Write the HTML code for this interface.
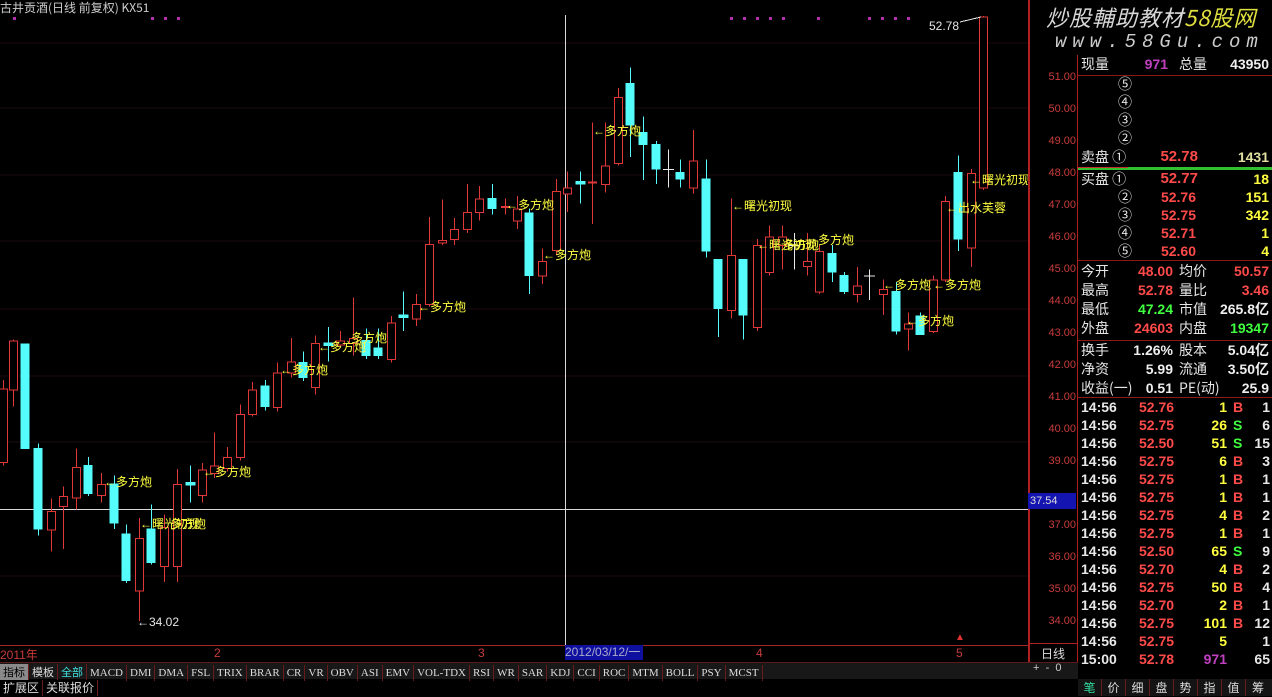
<!DOCTYPE html>
<html><head><meta charset="utf-8"><style>
*{margin:0;padding:0;box-sizing:border-box}
body{width:1272px;height:696px;background:#000;position:relative;overflow:hidden;font-family:"Liberation Sans","Noto Sans CJK SC",sans-serif;color:#ddd}
.a{position:absolute;white-space:nowrap}
.p{font-size:14px;line-height:18px;font-weight:bold}
.w{color:#e6e6e6;font-weight:normal;font-family:"Noto Sans CJK SC",sans-serif}
.r{color:#ff4a4a}.g{color:#40ff40}.y{color:#ffff40}.m{color:#c040c0}
.rt{text-align:right}
.ax{font-size:11px;color:#c83c3c;right:0}
.tab span{display:inline-block;padding:0 3px;border-right:1px solid #6a1a1a;font-size:11px;color:#ddd;line-height:16px;font-family:"Liberation Serif","Noto Sans CJK SC",serif}
svg *{shape-rendering:crispEdges}
.sc *{vector-effect:non-scaling-stroke}
</style></head><body>
<svg class="a" style="left:0px;top:0px" width="1028" height="645">
<g stroke="#1c0c0c" stroke-width="1">
<line x1="0" y1="43" x2="1028" y2="43"/><line x1="0" y1="108" x2="1028" y2="108"/><line x1="0" y1="175" x2="1028" y2="175"/><line x1="0" y1="241" x2="1028" y2="241"/><line x1="0" y1="309" x2="1028" y2="309"/><line x1="0" y1="376" x2="1028" y2="376"/><line x1="0" y1="442" x2="1028" y2="442"/><line x1="0" y1="576" x2="1028" y2="576"/>
</g>
<g fill="#b030b0"><rect x="13" y="17" width="3" height="3"/><rect x="151" y="17" width="3" height="3"/><rect x="164" y="17" width="3" height="3"/><rect x="177" y="17" width="3" height="3"/><rect x="730" y="17" width="3" height="3"/><rect x="743" y="17" width="3" height="3"/><rect x="756" y="17" width="3" height="3"/><rect x="769" y="17" width="3" height="3"/><rect x="782" y="17" width="3" height="3"/><rect x="817" y="17" width="3" height="3"/><rect x="868" y="17" width="3" height="3"/><rect x="881" y="17" width="3" height="3"/><rect x="894" y="17" width="3" height="3"/><rect x="907" y="17" width="3" height="3"/></g>
<line x1="565.5" y1="15" x2="565.5" y2="645" stroke="#d8d8d8"/>
<line x1="0" y1="509.5" x2="1028" y2="509.5" stroke="#d8d8d8"/>
<g class="sc" transform="scale(1,1.225)">
<g stroke="#e03838" fill="#000" stroke-width="1">
<line x1="3.5" y1="310" x2="3.5" y2="380"/><rect x="-1.5" y="317.5" width="9" height="60"/>
<line x1="13.5" y1="277" x2="13.5" y2="332"/><rect x="9.5" y="278.5" width="8" height="40"/>
<line x1="51.5" y1="407" x2="51.5" y2="450"/><rect x="47.5" y="417.5" width="8" height="15"/>
<line x1="63.5" y1="397" x2="63.5" y2="448"/><rect x="59.5" y="405.5" width="8" height="8"/>
<line x1="76.5" y1="366" x2="76.5" y2="416"/><rect x="72.5" y="381.5" width="8" height="25"/>
<line x1="101.5" y1="386" x2="101.5" y2="410"/><rect x="97.5" y="395.5" width="8" height="9"/>
<line x1="139.5" y1="423" x2="139.5" y2="507"/><rect x="135.5" y="439.5" width="8" height="43"/>
<line x1="164.5" y1="420" x2="164.5" y2="475"/><rect x="160.5" y="430.5" width="8" height="32"/>
<line x1="177.5" y1="383" x2="177.5" y2="475"/><rect x="173.5" y="395.5" width="8" height="67"/>
<line x1="202.5" y1="378" x2="202.5" y2="410"/><rect x="198.5" y="383.5" width="8" height="21"/>
<line x1="214.5" y1="353" x2="214.5" y2="390"/><rect x="210.5" y="380.5" width="8" height="6"/>
<line x1="227.5" y1="365" x2="227.5" y2="385"/><rect x="223.5" y="373.5" width="8" height="9"/>
<line x1="240.5" y1="330" x2="240.5" y2="376"/><rect x="236.5" y="338.5" width="8" height="35"/>
<line x1="252.5" y1="312" x2="252.5" y2="340"/><rect x="248.5" y="318.5" width="8" height="20"/>
<line x1="277.5" y1="296" x2="277.5" y2="336"/><rect x="273.5" y="304.5" width="8" height="28"/>
<line x1="291.5" y1="276" x2="291.5" y2="308"/><rect x="287.5" y="295.5" width="8" height="9"/>
<line x1="315.5" y1="274" x2="315.5" y2="322"/><rect x="311.5" y="280.5" width="8" height="36"/>
<line x1="340.5" y1="270" x2="340.5" y2="284"/><rect x="336.5" y="278.5" width="8" height="3"/>
<line x1="353.5" y1="243" x2="353.5" y2="290"/><rect x="349.5" y="276.5" width="8" height="4"/>
<line x1="391.5" y1="258" x2="391.5" y2="296"/><rect x="387.5" y="263.5" width="8" height="30"/>
<line x1="416.5" y1="240" x2="416.5" y2="266"/><rect x="412.5" y="248.5" width="8" height="12"/>
<line x1="429.5" y1="177" x2="429.5" y2="250"/><rect x="425.5" y="199.5" width="8" height="49"/>
<line x1="442.5" y1="163" x2="442.5" y2="200"/><rect x="438.5" y="196.5" width="8" height="2"/>
<line x1="454.5" y1="178" x2="454.5" y2="200"/><rect x="450.5" y="187.5" width="8" height="8"/>
<line x1="467.5" y1="150" x2="467.5" y2="190"/><rect x="463.5" y="173.5" width="8" height="14"/>
<line x1="479.5" y1="152" x2="479.5" y2="180"/><rect x="475.5" y="162.5" width="8" height="11"/>
<line x1="505.5" y1="162" x2="505.5" y2="175"/><rect x="501.5" y="168.5" width="8" height="1"/>
<line x1="517.5" y1="160" x2="517.5" y2="187"/><rect x="513.5" y="170.5" width="8" height="10"/>
<line x1="542.5" y1="203" x2="542.5" y2="232"/><rect x="538.5" y="213.5" width="8" height="12"/>
<line x1="556.5" y1="146" x2="556.5" y2="208"/><rect x="552.5" y="156.5" width="8" height="48"/>
<line x1="567.5" y1="140" x2="567.5" y2="173"/><rect x="563.5" y="153.5" width="8" height="5"/>
<line x1="592.5" y1="100" x2="592.5" y2="183"/><rect x="588.5" y="148.5" width="8" height="1"/>
<line x1="605.5" y1="100" x2="605.5" y2="157"/><rect x="601.5" y="135.5" width="8" height="15"/>
<line x1="618.5" y1="72" x2="618.5" y2="135"/><rect x="614.5" y="79.5" width="8" height="54"/>
<line x1="693.5" y1="106" x2="693.5" y2="158"/><rect x="689.5" y="131.5" width="8" height="22"/>
<line x1="731.5" y1="162" x2="731.5" y2="260"/><rect x="727.5" y="208.5" width="8" height="45"/>
<line x1="757.5" y1="195" x2="757.5" y2="270"/><rect x="753.5" y="200.5" width="8" height="67"/>
<line x1="769.5" y1="184" x2="769.5" y2="225"/><rect x="765.5" y="193.5" width="8" height="29"/>
<line x1="782.5" y1="184" x2="782.5" y2="220"/><rect x="778.5" y="193.5" width="8" height="7"/>
<line x1="807.5" y1="190" x2="807.5" y2="225"/><rect x="803.5" y="213.5" width="8" height="4"/>
<line x1="819.5" y1="200" x2="819.5" y2="240"/><rect x="815.5" y="205.5" width="8" height="33"/>
<line x1="857.5" y1="218" x2="857.5" y2="247"/><rect x="853.5" y="233.5" width="8" height="7"/>
<line x1="883.5" y1="228" x2="883.5" y2="257"/><rect x="879.5" y="236.5" width="8" height="4"/>
<line x1="908.5" y1="255" x2="908.5" y2="286"/><rect x="904.5" y="264.5" width="8" height="4"/>
<line x1="933.5" y1="225" x2="933.5" y2="272"/><rect x="929.5" y="228.5" width="8" height="42"/>
<line x1="945.5" y1="160" x2="945.5" y2="230"/><rect x="941.5" y="164.5" width="8" height="64"/>
<line x1="971.5" y1="138" x2="971.5" y2="218"/><rect x="967.5" y="141.5" width="8" height="61"/>
<line x1="983.5" y1="13" x2="983.5" y2="155"/><rect x="979.5" y="14" width="8" height="139.5"/>
</g>
<g stroke="#54fcfc" fill="#54fcfc">
<rect x="21" y="281" width="8" height="85"/>
<line x1="38.5" y1="362" x2="38.5" y2="437"/><rect x="34" y="366" width="8" height="66"/>
<line x1="88.5" y1="373" x2="88.5" y2="405"/><rect x="84" y="380" width="8" height="23"/>
<line x1="114.5" y1="388" x2="114.5" y2="432"/><rect x="110" y="395" width="8" height="32"/>
<line x1="126.5" y1="428" x2="126.5" y2="476"/><rect x="122" y="436" width="8" height="38"/>
<line x1="151.5" y1="412" x2="151.5" y2="461"/><rect x="147" y="432" width="8" height="27"/>
<line x1="190.5" y1="380" x2="190.5" y2="410"/><rect x="186" y="394" width="9" height="2"/>
<line x1="265.5" y1="310" x2="265.5" y2="335"/><rect x="261" y="315" width="8" height="17"/>
<line x1="303.5" y1="287" x2="303.5" y2="311"/><rect x="299" y="296" width="8" height="12"/>
<line x1="328.5" y1="267" x2="328.5" y2="295"/><rect x="324" y="280" width="9" height="2"/>
<line x1="366.5" y1="268" x2="366.5" y2="293"/><rect x="362" y="278" width="8" height="12"/>
<line x1="378.5" y1="268" x2="378.5" y2="293"/><rect x="374" y="284" width="8" height="6"/>
<line x1="403.5" y1="238" x2="403.5" y2="270"/><rect x="399" y="257" width="9" height="2"/>
<line x1="492.5" y1="150" x2="492.5" y2="175"/><rect x="488" y="162" width="8" height="8"/>
<line x1="529.5" y1="170" x2="529.5" y2="240"/><rect x="525" y="174" width="8" height="51"/>
<line x1="580.5" y1="140" x2="580.5" y2="166"/><rect x="576" y="148" width="9" height="2"/>
<line x1="630.5" y1="55" x2="630.5" y2="128"/><rect x="626" y="68" width="8" height="34"/>
<line x1="643.5" y1="95" x2="643.5" y2="147"/><rect x="639" y="108" width="8" height="10"/>
<line x1="656.5" y1="115" x2="656.5" y2="150"/><rect x="652" y="118" width="8" height="20"/>
<line x1="680.5" y1="130" x2="680.5" y2="153"/><rect x="676" y="141" width="8" height="5"/>
<line x1="706.5" y1="130" x2="706.5" y2="210"/><rect x="702" y="146" width="8" height="59"/>
<line x1="718.5" y1="212" x2="718.5" y2="275"/><rect x="714" y="212" width="8" height="40"/>
<line x1="743.5" y1="212" x2="743.5" y2="277"/><rect x="739" y="212" width="8" height="45"/>
<line x1="832.5" y1="200" x2="832.5" y2="230"/><rect x="828" y="207" width="8" height="15"/>
<line x1="844.5" y1="222" x2="844.5" y2="240"/><rect x="840" y="225" width="8" height="13"/>
<line x1="896.5" y1="230" x2="896.5" y2="273"/><rect x="892" y="238" width="8" height="32"/>
<line x1="920.5" y1="255" x2="920.5" y2="273"/><rect x="916" y="258" width="8" height="15"/>
<line x1="958.5" y1="127" x2="958.5" y2="205"/><rect x="954" y="141" width="8" height="54"/>
</g>
<g stroke="#e8e8e8"><line x1="668.5" y1="122" x2="668.5" y2="153"/><line x1="663" y1="138.5" x2="674" y2="138.5"/><line x1="794.5" y1="190" x2="794.5" y2="220"/><line x1="789" y1="200.5" x2="800" y2="200.5"/><line x1="869.5" y1="220" x2="869.5" y2="245"/><line x1="864" y1="225.5" x2="875" y2="225.5"/></g>
</g>
<line x1="960" y1="22" x2="981" y2="17" stroke="#e8e8e8"/>
</svg>
<div style="font-size:12px;line-height:14px">
<div class="a w" style="left:0px;top:1px;color:#ccc">古井贡酒(日线 前复权) KX51</div>
<div class="a" style="left:929px;top:19px;color:#e6e6e6">52.78</div>
<div class="a" style="left:137px;top:615px;color:#e6e6e6">←34.02</div>
<div class="a y" style="left:104px;top:475px">←多方炮</div>
<div class="a y" style="left:140px;top:517px">←曙光初现</div><div class="a y" style="left:170px;top:517px">多方炮</div>
<div class="a y" style="left:203px;top:465px">←多方炮</div>
<div class="a y" style="left:280px;top:363px">←多方炮</div>
<div class="a y" style="left:318px;top:340px">←多方炮</div>
<div class="a y" style="left:351px;top:331px">多方炮</div>
<div class="a y" style="left:418px;top:300px">←多方炮</div>
<div class="a y" style="left:506px;top:198px">←多方炮</div>
<div class="a y" style="left:543px;top:248px">←多方炮</div>
<div class="a y" style="left:593px;top:124px">←多方炮</div>
<div class="a y" style="left:732px;top:199px">←曙光初现</div>
<div class="a y" style="left:757px;top:238px">←曙光初现</div><div class="a y" style="left:783px;top:238px">多方炮</div>
<div class="a y" style="left:818px;top:233px">多方炮</div>
<div class="a y" style="left:883px;top:278px">←多方炮</div>
<div class="a y" style="left:933px;top:278px">←多方炮</div>
<div class="a y" style="left:906px;top:314px">←多方炮</div>
<div class="a y" style="left:946px;top:201px">←出水芙蓉</div>
<div class="a y" style="left:970px;top:173px">←曙光初现</div>
</div>
<div class="a" style="left:0px;top:645px;width:1028px;height:1px;background:#a02828"></div>
<div class="a" style="left:0px;top:646px;font-size:12px;color:#c83c3c">2011年</div>
<div class="a" style="left:214px;top:646px;font-size:12px;color:#c83c3c">2</div>
<div class="a" style="left:478px;top:646px;font-size:12px;color:#c83c3c">3</div>
<div class="a" style="left:565px;top:645px;width:78px;height:15px;background:#1010a0;font-size:12px;color:#aac;line-height:15px">2012/03/12/一</div>
<div class="a" style="left:756px;top:646px;font-size:12px;color:#c83c3c">4</div>
<div class="a" style="left:956px;top:646px;font-size:12px;color:#c83c3c">5</div>
<div class="a" style="left:955px;top:632px;font-size:10px;color:#e03030">▲</div>
<div class="a tab" style="left:0px;top:662px;width:1078px;height:17px;background:#181818;border-top:1px solid #5a1a1a">
<span style="background:#8a8a8a;color:#000;font-family:'Noto Sans CJK SC'">指标</span><span style="font-family:'Noto Sans CJK SC'">模板</span><span style="color:#40e0e0;font-family:'Noto Sans CJK SC'">全部</span><span>MACD</span><span>DMI</span><span>DMA</span><span>FSL</span><span>TRIX</span><span>BRAR</span><span>CR</span><span>VR</span><span>OBV</span><span>ASI</span><span>EMV</span><span>VOL-TDX</span><span>RSI</span><span>WR</span><span>SAR</span><span>KDJ</span><span>CCI</span><span>ROC</span><span>MTM</span><span>BOLL</span><span>PSY</span><span>MCST</span>
</div>
<div class="a tab" style="left:0px;top:679px;height:17px"><span style="font-family:'Noto Sans CJK SC';font-size:12px">扩展区</span><span style="font-family:'Noto Sans CJK SC';font-size:12px">关联报价</span></div>
<div class="a" style="left:1028px;top:0px;width:2px;height:662px;background:#b02020"></div>
<div class="a" style="left:1077px;top:55px;width:1px;height:607px;background:#b02020"></div>
<div class="a" style="left:1030px;top:0px;width:46px;height:660px">
<div class="a ax" style="top:71px">51.00</div><div class="a ax" style="top:103px">50.00</div><div class="a ax" style="top:135px">49.00</div><div class="a ax" style="top:167px">48.00</div><div class="a ax" style="top:199px">47.00</div><div class="a ax" style="top:231px">46.00</div><div class="a ax" style="top:263px">45.00</div><div class="a ax" style="top:295px">44.00</div><div class="a ax" style="top:327px">43.00</div><div class="a ax" style="top:359px">42.00</div><div class="a ax" style="top:391px">41.00</div><div class="a ax" style="top:423px">40.00</div><div class="a ax" style="top:455px">39.00</div><div class="a ax" style="top:519px">37.00</div><div class="a ax" style="top:551px">36.00</div><div class="a ax" style="top:583px">35.00</div><div class="a ax" style="top:615px">34.00</div>
<div class="a" style="left:-2px;top:493px;width:48px;height:16px;background:#1414b0;color:#ddd;font-size:11px;line-height:16px;padding-left:2px">37.54</div>
</div>
<div class="a" style="left:1030px;top:643px;width:47px;height:1px;background:#b02020"></div>
<div class="a" style="left:1041px;top:645px;font-size:12px;color:#ddd;font-family:'Noto Sans CJK SC'">日线</div>
<div class="a" style="left:1030px;top:662px;font-size:11px;color:#ccc;width:47px">&nbsp;+ &nbsp;- &nbsp;0</div>
<div class="a" style="left:1046px;top:3px;font-size:22px;font-style:italic;color:#d8d8d8;letter-spacing:1px;font-family:'Noto Sans CJK SC',sans-serif;line-height:28px">炒股輔助教材<span style="color:#e0e040">58股网</span></div>
<div class="a" style="left:1055px;top:31px;font-size:19px;font-style:italic;color:#ccc;letter-spacing:6px;font-family:'Liberation Mono',monospace">www.58Gu.com</div>
<div class="a" style="left:1078px;top:75px;width:194px;height:1px;background:#8a1a1a"></div>
<div class="a" style="left:1078px;top:167px;width:194px;height:3px;background:#30c030"></div>
<div class="a" style="left:1078px;top:167px;width:50px;height:1px;background:#c03030"></div>
<div class="a" style="left:1078px;top:260px;width:194px;height:1px;background:#8a1a1a"></div>
<div class="a" style="left:1078px;top:340px;width:194px;height:1px;background:#8a1a1a"></div>
<div class="a" style="left:1078px;top:397px;width:194px;height:1px;background:#8a1a1a"></div>
<div class="a p" style="left:1081px;top:55px;width:190px">
<div class="a w" style="left:0px;top:0px">现量</div><div class="a m rt" style="left:47px;width:40px;top:0px">971</div><div class="a w" style="left:98px;top:0px">总量</div><div class="a rt" style="left:130px;width:58px;top:0px;color:#eee">43950</div>
<div class="a w" style="left:37px;top:20px">⑤</div><div class="a w" style="left:37px;top:38px">④</div><div class="a w" style="left:37px;top:56px">③</div><div class="a w" style="left:37px;top:74px">②</div>
<div class="a w" style="left:0px;top:93px">卖盘 ①</div><div class="a r rt" style="left:47px;width:70px;top:93px;font-size:15px">52.78</div><div class="a rt" style="left:130px;width:58px;top:93px;color:#e0e0a0">1431</div>
<div class="a w" style="left:0px;top:115px">买盘 ①</div><div class="a r rt" style="left:47px;width:70px;top:115px;font-size:15px">52.77</div><div class="a y rt" style="left:130px;width:58px;top:115px">18</div>
<div class="a w" style="left:37px;top:133px">②</div><div class="a r rt" style="left:47px;width:68px;top:133px">52.76</div><div class="a y rt" style="left:130px;width:58px;top:133px">151</div>
<div class="a w" style="left:37px;top:151px">③</div><div class="a r rt" style="left:47px;width:68px;top:151px">52.75</div><div class="a y rt" style="left:130px;width:58px;top:151px">342</div>
<div class="a w" style="left:37px;top:169px">④</div><div class="a r rt" style="left:47px;width:68px;top:169px">52.71</div><div class="a y rt" style="left:130px;width:58px;top:169px">1</div>
<div class="a w" style="left:37px;top:187px">⑤</div><div class="a r rt" style="left:47px;width:68px;top:187px">52.60</div><div class="a y rt" style="left:130px;width:58px;top:187px">4</div>
<div class="a w" style="left:0px;top:207px">今开</div><div class="a r rt" style="left:40px;width:52px;top:207px">48.00</div><div class="a w" style="left:98px;top:207px">均价</div><div class="a r rt" style="left:130px;width:58px;top:207px">50.57</div>
<div class="a w" style="left:0px;top:226px">最高</div><div class="a r rt" style="left:40px;width:52px;top:226px">52.78</div><div class="a w" style="left:98px;top:226px">量比</div><div class="a r rt" style="left:130px;width:58px;top:226px">3.46</div>
<div class="a w" style="left:0px;top:245px">最低</div><div class="a g rt" style="left:40px;width:52px;top:245px">47.24</div><div class="a w" style="left:98px;top:245px">市值</div><div class="a rt" style="left:110px;width:78px;top:245px;color:#eee">265.8亿</div>
<div class="a w" style="left:0px;top:264px">外盘</div><div class="a r rt" style="left:40px;width:52px;top:264px">24603</div><div class="a w" style="left:98px;top:264px">内盘</div><div class="a g rt" style="left:130px;width:58px;top:264px">19347</div>
<div class="a w" style="left:0px;top:286px">换手</div><div class="a rt" style="left:40px;width:52px;top:286px;color:#eee">1.26%</div><div class="a w" style="left:98px;top:286px">股本</div><div class="a rt" style="left:110px;width:78px;top:286px;color:#eee">5.04亿</div>
<div class="a w" style="left:0px;top:305px">净资</div><div class="a rt" style="left:40px;width:52px;top:305px;color:#eee">5.99</div><div class="a w" style="left:98px;top:305px">流通</div><div class="a rt" style="left:110px;width:78px;top:305px;color:#eee">3.50亿</div>
<div class="a w" style="left:0px;top:324px">收益(一)</div><div class="a rt" style="left:40px;width:52px;top:324px;color:#eee">0.51</div><div class="a w" style="left:98px;top:324px">PE(动)</div><div class="a rt" style="left:130px;width:58px;top:324px;color:#eee">25.9</div>
</div>
<div class="a p" style="left:1081px;top:398px;width:190px;color:#e8e8e8">
<div class="a" style="top:0px">14:56</div><div class="a r" style="left:58px;top:0px">52.76</div><div class="a y rt" style="left:110px;width:36px;top:0px">1</div><div class="a r" style="left:152px;top:0px">B</div><div class="a rt" style="left:170px;width:19px;top:0px">1</div>
<div class="a" style="top:18px">14:56</div><div class="a r" style="left:58px;top:18px">52.75</div><div class="a y rt" style="left:110px;width:36px;top:18px">26</div><div class="a g" style="left:152px;top:18px">S</div><div class="a rt" style="left:170px;width:19px;top:18px">6</div>
<div class="a" style="top:36px">14:56</div><div class="a r" style="left:58px;top:36px">52.50</div><div class="a y rt" style="left:110px;width:36px;top:36px">51</div><div class="a g" style="left:152px;top:36px">S</div><div class="a rt" style="left:170px;width:19px;top:36px">15</div>
<div class="a" style="top:54px">14:56</div><div class="a r" style="left:58px;top:54px">52.75</div><div class="a y rt" style="left:110px;width:36px;top:54px">6</div><div class="a r" style="left:152px;top:54px">B</div><div class="a rt" style="left:170px;width:19px;top:54px">3</div>
<div class="a" style="top:72px">14:56</div><div class="a r" style="left:58px;top:72px">52.75</div><div class="a y rt" style="left:110px;width:36px;top:72px">1</div><div class="a r" style="left:152px;top:72px">B</div><div class="a rt" style="left:170px;width:19px;top:72px">1</div>
<div class="a" style="top:90px">14:56</div><div class="a r" style="left:58px;top:90px">52.75</div><div class="a y rt" style="left:110px;width:36px;top:90px">1</div><div class="a r" style="left:152px;top:90px">B</div><div class="a rt" style="left:170px;width:19px;top:90px">1</div>
<div class="a" style="top:108px">14:56</div><div class="a r" style="left:58px;top:108px">52.75</div><div class="a y rt" style="left:110px;width:36px;top:108px">4</div><div class="a r" style="left:152px;top:108px">B</div><div class="a rt" style="left:170px;width:19px;top:108px">2</div>
<div class="a" style="top:126px">14:56</div><div class="a r" style="left:58px;top:126px">52.75</div><div class="a y rt" style="left:110px;width:36px;top:126px">1</div><div class="a r" style="left:152px;top:126px">B</div><div class="a rt" style="left:170px;width:19px;top:126px">1</div>
<div class="a" style="top:144px">14:56</div><div class="a r" style="left:58px;top:144px">52.50</div><div class="a y rt" style="left:110px;width:36px;top:144px">65</div><div class="a g" style="left:152px;top:144px">S</div><div class="a rt" style="left:170px;width:19px;top:144px">9</div>
<div class="a" style="top:162px">14:56</div><div class="a r" style="left:58px;top:162px">52.70</div><div class="a y rt" style="left:110px;width:36px;top:162px">4</div><div class="a r" style="left:152px;top:162px">B</div><div class="a rt" style="left:170px;width:19px;top:162px">2</div>
<div class="a" style="top:180px">14:56</div><div class="a r" style="left:58px;top:180px">52.75</div><div class="a y rt" style="left:110px;width:36px;top:180px">50</div><div class="a r" style="left:152px;top:180px">B</div><div class="a rt" style="left:170px;width:19px;top:180px">4</div>
<div class="a" style="top:198px">14:56</div><div class="a r" style="left:58px;top:198px">52.70</div><div class="a y rt" style="left:110px;width:36px;top:198px">2</div><div class="a r" style="left:152px;top:198px">B</div><div class="a rt" style="left:170px;width:19px;top:198px">1</div>
<div class="a" style="top:216px">14:56</div><div class="a r" style="left:58px;top:216px">52.75</div><div class="a y rt" style="left:110px;width:36px;top:216px">101</div><div class="a r" style="left:152px;top:216px">B</div><div class="a rt" style="left:170px;width:19px;top:216px">12</div>
<div class="a" style="top:234px">14:56</div><div class="a r" style="left:58px;top:234px">52.75</div><div class="a y rt" style="left:110px;width:36px;top:234px">5</div><div class="a rt" style="left:170px;width:19px;top:234px">1</div>
<div class="a" style="top:252px">15:00</div><div class="a r" style="left:58px;top:252px">52.78</div><div class="a m rt" style="left:110px;width:36px;top:252px">971</div><div class="a rt" style="left:160px;width:29px;top:252px">65</div>
</div>
<div class="a" style="left:1078px;top:679px;width:194px;height:17px;background:#141414;font-size:12px;line-height:17px;color:#ddd;font-family:'Noto Sans CJK SC',sans-serif">
<span style="display:inline-block;width:24px;text-align:center;color:#30e0a0;border-right:1px solid #6a1a1a">笔</span><span style="display:inline-block;width:24px;text-align:center;border-right:1px solid #6a1a1a">价</span><span style="display:inline-block;width:24px;text-align:center;border-right:1px solid #6a1a1a">细</span><span style="display:inline-block;width:24px;text-align:center;border-right:1px solid #6a1a1a">盘</span><span style="display:inline-block;width:24px;text-align:center;border-right:1px solid #6a1a1a">势</span><span style="display:inline-block;width:24px;text-align:center;border-right:1px solid #6a1a1a">指</span><span style="display:inline-block;width:24px;text-align:center;border-right:1px solid #6a1a1a">值</span><span style="display:inline-block;width:24px;text-align:center">筹</span>
</div>
</body></html>
